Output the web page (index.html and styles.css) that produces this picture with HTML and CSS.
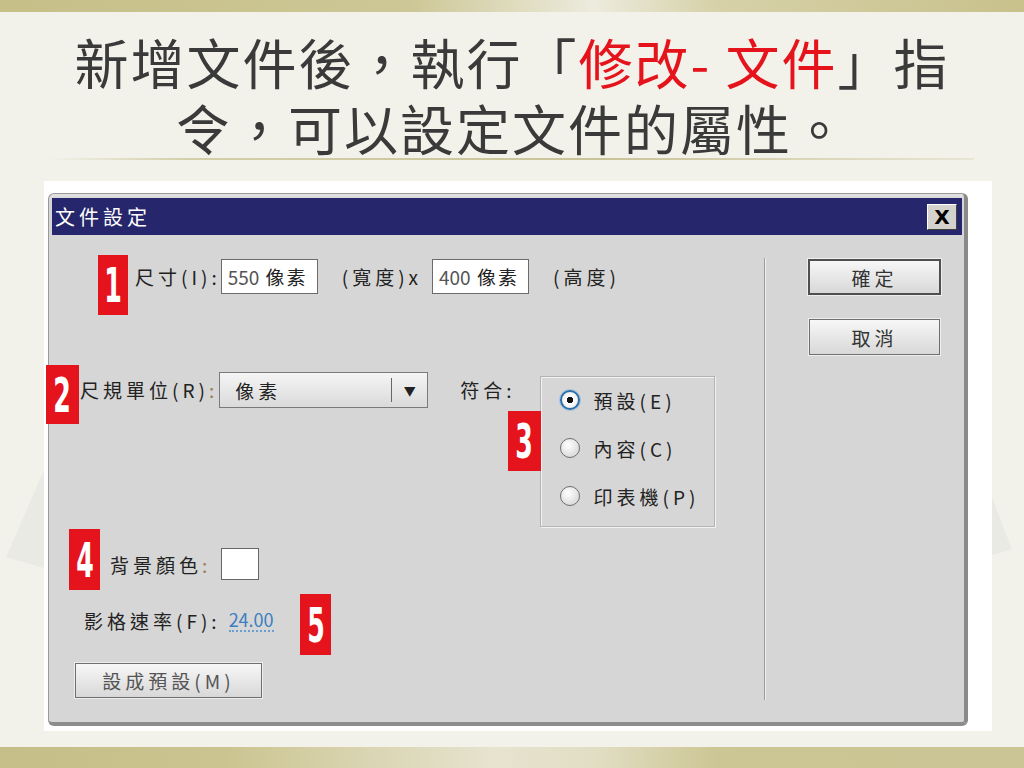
FILE: index.html
```html
<!DOCTYPE html>
<html lang="zh-Hant">
<head>
  <meta charset="UTF-8" />
  <title>文件設定</title>
  <link rel="stylesheet" href="styles.css">
</head>
<body>
  <div class="band"></div>
  <h1 class="title">新增文件後，執行「<span class="hl">修改- 文件</span>」指<br>令，可以設定文件的屬性。</h1>
  <div class="rule"></div>

  <div class="shot">
    <div class="dialog">
      <div class="titlebar">
        <span>文件設定</span>
        <span class="close">X</span>
      </div>
      <div class="dlg-body">
        <div class="left">
          <div class="row row-size">
            <span class="lbl">尺寸(I):</span>
            <span class="field"><span class="num">550</span> 像素</span>
            <span class="lbl unit">(寬度)x</span>
            <span class="field"><span class="num">400</span> 像素</span>
            <span class="lbl unit">(高度)</span>
          </div>

          <div class="row row-units">
            <span class="lbl">尺規單位(R)<span class="colon">:</span></span>
            <div class="select">
              <span class="sel-text">像素</span>
              <span class="sel-arrow">▼</span>
            </div>
            <span class="lbl match">符合:</span>
            <div class="group">
              <div class="radio"><span class="dot checked"></span>預設(E)</div>
              <div class="radio"><span class="dot"></span>內容(C)</div>
              <div class="radio"><span class="dot"></span>印表機(P)</div>
            </div>
          </div>

          <div class="row row-bg">
            <span class="lbl">背景顏色<span class="colon">:</span></span>
            <span class="swatch"></span>
          </div>

          <div class="row row-fps">
            <span class="lbl">影格速率(F):</span>
            <span class="fps">24.00</span>
          </div>

          <div class="btn btn-wide">設成預設(M)</div>
        </div>

        <div class="sep"></div>

        <div class="right">
          <div class="btn btn-ok">確定</div>
          <div class="btn btn-cancel">取消</div>
        </div>
      </div>
    </div>

    <div class="badge b1"><span>1</span></div>
    <div class="badge b2"><span>2</span></div>
    <div class="badge b3"><span>3</span></div>
    <div class="badge b4"><span>4</span></div>
    <div class="badge b5"><span>5</span></div>
  </div>

  <div class="band band-bottom"></div>
</body>
</html>
```

FILE: styles.css
```css
body {
  position: relative;
  margin: 0;
  height: 768px;
  overflow: hidden;
  display: flex;
  flex-direction: column;
  background: #f3f2ea;
  font-family: "Noto Sans CJK TC", sans-serif;
}
/* faint paper shapes peeking out behind the panel */
body::before,
body::after {
  content: "";
  position: absolute;
  background: #eaeae5;
}
body::before {
  left: 6px;
  top: 470px;
  width: 38px;
  height: 98px;
  clip-path: polygon(100% 0, 100% 100%, 0 89%);
}
body::after {
  left: 992px;
  top: 497px;
  width: 20px;
  height: 58px;
  clip-path: polygon(0 0, 100% 90%, 0 100%);
}
.band {
  height: 12px;
  flex-shrink: 0;
  background: linear-gradient(to right, #c6bf88 0%, #cdc796 40%, #ecebdd 58%, #d6d1a8 70%, #c8c18c 100%);
}
.band-bottom {
  height: 21px;
  margin-top: auto;
  background: linear-gradient(to right, #c6be88 0%, #cbc490 22%, #e6e3cf 48%, #e2dec4 58%, #ccc694 70%, #cbc595 100%);
}

/* heading */
.title {
  margin: 17px 0 0;
  font-size: 54px;
  font-weight: 400;
  line-height: 66px;
  letter-spacing: 2px;
  text-align: center;
  color: #3a3a3a;
}
.title .hl {
  color: #e5131b;
}
.rule {
  height: 2px;
  margin: -3px 50px 0 46px;
  background: linear-gradient(to right, rgba(205, 200, 160, 0), #d3cfaa 15%, #c9c398 60%, rgba(205, 200, 160, 0.3));
}

/* screenshot panel */
.shot {
  position: relative;
  z-index: 1;
  width: 948px;
  height: 550px;
  margin: 21px 0 0 44px;
  background: #fff;
  flex-shrink: 0;
}
.dialog {
  width: 910px;
  margin: 12px 0 0 4px;
  padding: 4px 2px 0 3px;
  border: 1px solid #999;
  border-right: 4px solid #8a8a8a;
  border-bottom: 4px solid #8c8c8c;
  border-radius: 6px;
  background: linear-gradient(#e2e2e2, #d6d6d6 6px);
}
.titlebar {
  height: 37px;
  display: flex;
  align-items: center;
  justify-content: space-between;
  padding: 0 5px 0 3px;
  background: #25266b;
  color: #fff;
  font-size: 20px;
  letter-spacing: 4px;
}
.close {
  width: 28px;
  height: 24px;
  display: flex;
  align-items: center;
  justify-content: center;
  background: #d4d2cc;
  border: 1px solid;
  border-color: #fff #404040 #404040 #fff;
  color: #000;
  font: bold 20px "DejaVu Sans", sans-serif;
  letter-spacing: 0;
}
.dlg-body {
  height: 487px;
  display: flex;
  background: #d6d6d6;
  color: #222;
  font-size: 19px;
}
.left {
  width: 712px;
  padding-top: 24px;
}
.row {
  display: flex;
  align-items: center;
}
.lbl {
  letter-spacing: 4px;
  white-space: nowrap;
}
.colon {
  color: #9a7b52;
}

.row-size {
  height: 35px;
  padding-left: 83px;
}
.field {
  box-sizing: border-box;
  width: 97px;
  height: 35px;
  padding-left: 6px;
  line-height: 33px;
  background: #fff;
  border: 1px solid #6b6b6b;
  letter-spacing: 2px;
  white-space: nowrap;
}
.num {
  color: #555;
  letter-spacing: 0;
}
.unit {
  margin: 0 10px 0 24px;
}

.row-units {
  margin-top: 78px;
  padding-left: 28px;
  align-items: flex-start;
}
.row-units .lbl {
  line-height: 36px;
}
.select {
  box-sizing: border-box;
  width: 209px;
  height: 36px;
  margin-left: 1px;
  display: flex;
  align-items: center;
  border: 1px solid #7a7a7a;
  background: linear-gradient(#f5f5f5, #dadada);
}
.sel-text {
  flex: 1;
  padding-left: 15px;
  letter-spacing: 4px;
}
.sel-arrow {
  width: 35px;
  height: 24px;
  border-left: 1px solid #666;
  display: flex;
  align-items: center;
  justify-content: center;
  font-size: 12px;
  color: #222;
}
.match {
  margin: 0 24px 0 32px;
}
.group {
  box-sizing: border-box;
  width: 175px;
  height: 151px;
  margin-top: 4px;
  padding: 11px 0 0 19px;
  display: flex;
  flex-direction: column;
  gap: 24px;
  border: 1px solid #b3b3b3;
  box-shadow: inset 1px 1px 0 #f2f2f2, 1px 1px 0 #f2f2f2;
}
.radio {
  height: 24px;
  display: flex;
  align-items: center;
  letter-spacing: 4px;
  white-space: nowrap;
}
.dot {
  box-sizing: border-box;
  width: 20px;
  height: 20px;
  margin-right: 14px;
  border-radius: 50%;
  border: 1px solid #6e6e6e;
  background: radial-gradient(circle at 40% 35%, #fff, #cfcfcf);
}
.dot.checked {
  border: 2px solid #2f6fa7;
  box-shadow: 0 0 0 1px #a7c6e2;
  background: radial-gradient(circle, #111 0 3px, #fff 3.5px, #e4e4e4);
}

.row-bg {
  height: 32px;
  margin-top: 21px;
  padding-left: 58px;
}
.swatch {
  box-sizing: border-box;
  width: 38px;
  height: 32px;
  margin-left: 10px;
  background: #fff;
  border: 1px solid #666;
}

.row-fps {
  height: 24px;
  margin-top: 28px;
  padding-left: 32px;
}
.fps {
  margin-left: 8px;
  color: #3c7fc0;
  font-size: 18px;
  line-height: 22px;
  border-bottom: 2px dotted #6b9ed0;
}

.btn {
  box-sizing: border-box;
  display: flex;
  align-items: center;
  justify-content: center;
  border: 1px solid #6f6f6f;
  background: linear-gradient(#f7f7f7, #d8d8d8);
  box-shadow: 0 0 0 1px #eeeeee;
  letter-spacing: 4px;
  color: #333;
}
.btn-wide {
  width: 187px;
  height: 35px;
  margin: 31px 0 0 23px;
  color: #555;
}

.sep {
  width: 1px;
  height: 442px;
  margin-top: 23px;
  background: #9c9c9c;
  border-right: 1px solid #efefef;
}
.right {
  padding: 24px 0 0 42px;
  display: flex;
  flex-direction: column;
  gap: 24px;
}
.btn-ok {
  width: 133px;
  height: 36px;
  border: 2px solid #4f4f4f;
}
.btn-cancel {
  width: 131px;
  height: 36px;
  margin-left: 1px;
}

/* numbered callouts laid over the screenshot */
.badge {
  position: absolute;
  display: flex;
  align-items: center;
  justify-content: center;
  background: #e5141c;
  color: #fff;
  font: bold 46px/1 "DejaVu Sans", sans-serif;
  overflow: hidden;
}
.badge span {
  display: block;
  transform: scale(0.55, 1.05);
}
.b1 { left: 54px; top: 74px; width: 30px; height: 60px; }
.b2 { left: 2px; top: 184px; width: 33px; height: 59px; }
.b3 { left: 464px; top: 230px; width: 33px; height: 60px; }
.b4 { left: 25px; top: 348px; width: 31px; height: 61px; }
.b5 { left: 256px; top: 413px; width: 31px; height: 61px; }
```
